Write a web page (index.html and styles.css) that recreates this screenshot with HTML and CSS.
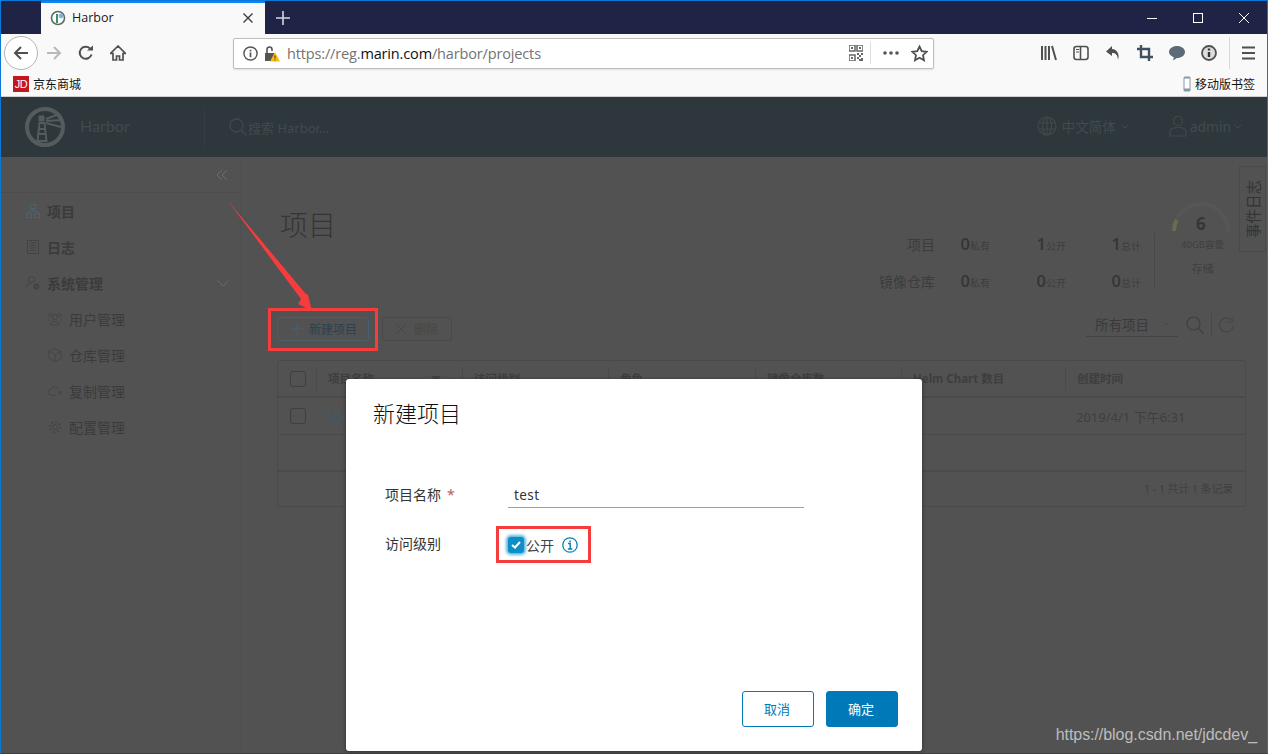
FILE: index.html
```html
<!DOCTYPE html>
<html lang="zh">
<head>
  <meta charset="UTF-8">
  <title>Harbor</title>
  <link rel="stylesheet" href="styles.css">
</head>
<body>
<div class="window">

  <!-- browser chrome -->
  <div class="titlebar">
    <div class="tab">
      <svg class="favicon" width="16" height="16" viewBox="0 0 16 16"><circle cx="8" cy="8" r="6.500" fill="#fff" stroke="#5b6b66" stroke-width="1.600"/><path d="M6 4h2v9H6z" fill="#3f8f5f"/><circle cx="11" cy="6" r="2.400" fill="#7fb6d8"/></svg>
      <span class="tab-title">Harbor</span>
      <svg class="tab-close" width="12" height="12" viewBox="0 0 12 12"><path d="M1.500 1.500l9 9M10.500 1.500l-9 9" stroke="#3c3c3c" stroke-width="1.400"/></svg>
    </div>
    <svg class="newtab" width="14" height="14" viewBox="0 0 14 14"><path d="M7 0v14M0 7h14" stroke="#d4d6e2" stroke-width="1.600"/></svg>
    <div class="win-controls">
      <svg width="46" height="12" viewBox="0 0 46 12"><path d="M18 6.500h10" stroke="#fff"/></svg>
      <svg width="46" height="12" viewBox="0 0 46 12"><rect x="18.500" y="1.500" width="9" height="9" fill="none" stroke="#fff"/></svg>
      <svg width="46" height="12" viewBox="0 0 46 12"><path d="M18 1l10 10M28 1L18 11" stroke="#fff"/></svg>
    </div>
  </div>

  <div class="toolbar">
    <div class="nav-btn back">
      <svg width="16" height="16" viewBox="0 0 16 16"><path d="M15 8H2M8 2L2 8l6 6" fill="none" stroke="#505050" stroke-width="2"/></svg>
    </div>
    <div class="nav-btn">
      <svg width="16" height="16" viewBox="0 0 16 16"><path d="M1 8h13M8 2l6 6-6 6" fill="none" stroke="#b9b9b9" stroke-width="2"/></svg>
    </div>
    <div class="nav-btn">
      <svg width="16" height="16" viewBox="0 0 16 16"><path d="M13.500 9.500A6 6 0 1 1 12 3.500" fill="none" stroke="#505050" stroke-width="2"/><path d="M9 5.500h6v-5z" fill="#505050"/></svg>
    </div>
    <div class="nav-btn">
      <svg width="16" height="16" viewBox="0 0 16 16"><path d="M8 1L.5 8.500H3V15h3.500v-4h3v4H13V8.500h2.500z" fill="none" stroke="#505050" stroke-width="1.700"/></svg>
    </div>

    <div class="urlbar">
      <svg class="url-info" width="15" height="15" viewBox="0 0 16 16"><circle cx="8" cy="8" r="7" fill="none" stroke="#555" stroke-width="1.500"/><path d="M8 7v5M8 4v1.800" stroke="#555" stroke-width="1.800"/></svg>
      <svg class="url-lock" width="16" height="17" viewBox="0 0 16 17"><path d="M1 8h9v8H1z" fill="#555"/><path d="M3 8V4.500a2.500 2.500 0 0 1 5 0V6" fill="none" stroke="#555" stroke-width="1.600"/><path d="M11 7l5 9.500H6z" fill="#fdb913"/><path d="M11 10.500v3M11 14.500v1" stroke="#333"/></svg>
      <span class="url-text">https://reg.<b>marin.com</b>/harbor/projects</span>
      <svg class="url-qr" width="14" height="16" viewBox="0 0 14 16"><path d="M0 0h6v6H0zM8 0h6v6H8zM0 10h6v6H0z" fill="none" stroke="#666" stroke-width="1.500"/><path d="M8 8h2v2H8zM12 8h2v2h-2zM10 10h2v2h-2zM8 12h2v2H8zM12 13h2v3h-2zM10 14h2v2h-2zM2 2h2v2H2zM10 2h2v2h-2zM2 12h2v2H2z" fill="#666"/></svg>
      <span class="url-sep"></span>
      <svg class="url-dots" width="16" height="4" viewBox="0 0 16 4"><circle cx="2" cy="2" r="1.800" fill="#555"/><circle cx="8" cy="2" r="1.800" fill="#555"/><circle cx="14" cy="2" r="1.800" fill="#555"/></svg>
      <svg class="url-star" width="17" height="17" viewBox="0 0 17 17"><path d="M8.500 1.500l2.200 4.700 5 .6-3.700 3.400 1 5-4.500-2.500L4 15.200l1-5-3.700-3.400 5-.6z" fill="none" stroke="#505050" stroke-width="1.800"/></svg>
    </div>

    <div class="tools">
      <svg width="16" height="16" viewBox="0 0 16 16"><path d="M1 1v14M4.500 1v14M8 1v14M11 1l4 14" fill="none" stroke="#505050" stroke-width="2"/></svg>
      <svg width="16" height="16" viewBox="0 0 16 16"><rect x="1" y="1.500" width="14" height="13" rx="2.500" fill="none" stroke="#505050" stroke-width="1.600"/><path d="M7.500 2v12" stroke="#505050" stroke-width="1.600"/><path d="M3 4.500h3M3 7h3" stroke="#505050"/></svg>
      <svg width="16" height="16" viewBox="0 0 16 16"><path d="M7 1L1 6.500 7 11V8c3.500 0 5.500 1.500 6 7 2-6-1-10.500-6-11z" fill="#505050"/></svg>
      <svg width="16" height="16" viewBox="0 0 16 16"><path d="M4 0v12h12M0 4h12v12" fill="none" stroke="#3f5160" stroke-width="2.400"/></svg>
      <svg width="16" height="16" viewBox="0 0 16 16"><path d="M8 1c4.400 0 8 2.600 8 6s-3.600 6-8 6l-4 2.500.8-3.300C2 11.200 0 9.300 0 7c0-3.400 3.600-6 8-6z" fill="#5d6b78"/></svg>
      <svg width="16" height="16" viewBox="0 0 16 16"><circle cx="8" cy="8" r="7" fill="#ddd" stroke="#505050" stroke-width="1.800"/><path d="M8 7v5M8 3.500v2" stroke="#333" stroke-width="2.400"/></svg>
      <span class="tool-sep"></span>
      <svg class="tool-menu" width="13" height="14" viewBox="0 0 13 14"><path d="M0 1.500h13M0 7h13M0 12.500h13" stroke="#505050" stroke-width="2"/></svg>
    </div>
  </div>

  <div class="bookmarks">
    <div class="bookmark"><span class="jd">JD</span>京东商城</div>
    <div class="bookmark">
      <svg width="8" height="16" viewBox="0 0 8 16"><rect x=".5" y=".5" width="7" height="15" rx="1.500" fill="#8a97a6"/><rect x="1.500" y="2.500" width="5" height="10" fill="#fff"/></svg>
      移动版书签
    </div>
  </div>

  <!-- harbor page, dimmed by the open modal -->
  <div class="page">
    <header class="app-header">
      <div class="brand">
        <svg width="40" height="40" viewBox="0 0 40 40" fill="none" stroke="#565c5e"><circle cx="20" cy="20" r="18" stroke-width="4"/><path d="M14.500 16l-2 18h9l-2-18zM13 22h8M13 27h8" stroke-width="2"/><path d="M14 14h5V9h-5z" fill="#565c5e" stroke-width="1"/><path d="M21 12l13-5M21 14l16-1M21 16l15 4" stroke-width="2"/></svg>
        <span>Harbor</span>
      </div>
      <div class="global-search">
        <svg width="18" height="18" viewBox="0 0 18 18" fill="none" stroke="#42494d" stroke-width="1.300"><circle cx="7.500" cy="7.500" r="6.500"/><path d="M12 12l5.500 5.500"/></svg>
        <span>搜索 Harbor...</span>
      </div>
      <div class="header-right">
        <div class="header-menu lang">
          <svg width="20" height="20" viewBox="0 0 20 20" fill="none" stroke="#42494d" stroke-width="1.200"><circle cx="10" cy="10" r="9"/><ellipse cx="10" cy="10" rx="4.500" ry="9"/><path d="M10 1v18M1.500 7h17M1.500 13h17"/></svg>
          <span>中文简体</span>
          <svg width="8" height="5" viewBox="0 0 8 5" fill="none" stroke="#42494d"><path d="M.5.500L4 4 7.500.500"/></svg>
        </div>
        <div class="header-menu user">
          <svg width="18" height="22" viewBox="0 0 18 22" fill="none" stroke="#42494d" stroke-width="1.200"><circle cx="9" cy="6" r="4.500"/><path d="M1 21v-4c0-3 3-4.500 8-4.500s8 1.500 8 4.500v4z"/></svg>
          <span>admin</span>
          <svg width="8" height="5" viewBox="0 0 8 5" fill="none" stroke="#42494d"><path d="M.5.500L4 4 7.500.500"/></svg>
        </div>
      </div>
    </header>

    <div class="app-body">
      <nav class="sidenav">
        <div class="nav-collapse">
          <svg width="12" height="12" viewBox="0 0 12 12" fill="none" stroke="#6e6e6e"><path d="M6 1L1 6l5 5M11 1L6 6l5 5"/></svg>
        </div>
        <a class="nav-item">
          <svg width="14" height="14" viewBox="0 0 14 14" fill="none" stroke="#4a6372"><rect x="4.500" y=".5" width="5" height="4"/><rect x=".5" y="9.500" width="5" height="4"/><rect x="8.500" y="9.500" width="5" height="4"/><path d="M7 4.500V7M3 9.500V7h8v2.500"/></svg>
          项目
        </a>
        <a class="nav-item">
          <svg width="14" height="14" viewBox="0 0 12 14" fill="none" stroke="#434343"><rect x=".5" y=".5" width="11" height="13"/><path d="M3 3h6M3 5.500h6M3 8h6M3 10.500h6"/></svg>
          日志
        </a>
        <a class="nav-item">
          <svg width="14" height="14" viewBox="0 0 14 14" fill="none" stroke="#434343"><circle cx="5.500" cy="3.500" r="3"/><path d="M.5 13v-2.500c0-2 2-3 5-3"/><circle cx="10.500" cy="10.500" r="2" stroke-width="2"/></svg>
          系统管理
          <svg class="nav-chevron" width="12" height="7" viewBox="0 0 12 7" fill="none" stroke="#6a6a6a"><path d="M.5.500L6 6 11.500.500"/></svg>
        </a>
        <a class="nav-item sub">
          <svg width="14" height="14" viewBox="0 0 14 14" fill="none" stroke="#454545"><circle cx="7" cy="5" r="2.500"/><circle cx="2.500" cy="3" r="1.800"/><circle cx="11.500" cy="3" r="1.800"/><path d="M3 13v-2c0-2 8-2 8 0v2zM.5 9V7M13.500 9V7"/></svg>
          用户管理
        </a>
        <a class="nav-item sub">
          <svg width="14" height="14" viewBox="0 0 14 14" fill="none" stroke="#454545"><path d="M7 .5l6 3v7l-6 3-6-3v-7zM1 3.500L7 6.500l6-3M7 6.500v7"/></svg>
          仓库管理
        </a>
        <a class="nav-item sub">
          <svg width="16" height="12" viewBox="0 0 16 12" fill="none" stroke="#454545"><path d="M9 11H4a3.500 3.500 0 0 1-.5-7A4.500 4.500 0 0 1 12 4M15 6v3h-3M15 9a3 3 0 0 0-3-2"/></svg>
          复制管理
        </a>
        <a class="nav-item sub">
          <svg width="14" height="14" viewBox="0 0 14 14" fill="none" stroke="#454545"><circle cx="7" cy="7" r="2.500"/><circle cx="7" cy="7" r="5.200" stroke-width="2" stroke-dasharray="2 2"/></svg>
          配置管理
        </a>
      </nav>

      <main class="content">
        <div class="summary-row">
          <h1 class="page-title">项目</h1>
          <div class="stats">
            <span class="stat-label">项目</span>
            <span class="stat"><b>0</b>私有</span>
            <span class="stat"><b>1</b>公开</span>
            <span class="stat"><b>1</b>总计</span>
            <span class="stat-label">镜像仓库</span>
            <span class="stat"><b>0</b>私有</span>
            <span class="stat"><b>0</b>公开</span>
            <span class="stat"><b>0</b>总计</span>
          </div>
          <div class="storage">
            <svg class="gauge" width="60" height="30" viewBox="0 0 60 30" fill="none" stroke-width="4"><path d="M3 29a27 27 0 0 1 54 0" stroke="#565656"/><path d="M3 29a27 27 0 0 1 2.500-11" stroke="#63704f"/></svg>
            <b class="gauge-num">6</b>
            <span class="gauge-cap">40GB容量</span>
            <span class="gauge-label">存储</span>
          </div>
        </div>

        <div class="action-bar">
          <button class="btn btn-new">
            <svg width="12" height="12" viewBox="0 0 12 12"><path d="M6 0v12M0 6h12" stroke="#46606e" stroke-width="1.200"/></svg>
            新建项目
          </button>
          <button class="btn btn-del">
            <svg width="10" height="10" viewBox="0 0 10 10"><path d="M0 0l10 10M10 0L0 10" stroke="#474747"/></svg>
            删除
          </button>
          <div class="filter">
            <div class="filter-select">
              所有项目
              <svg width="8" height="5" viewBox="0 0 8 5" fill="none" stroke="#474747"><path d="M.5.500L4 4 7.500.500"/></svg>
            </div>
            <svg width="18" height="18" viewBox="0 0 18 18" fill="none" stroke="#3f3f3f" stroke-width="1.200"><circle cx="7.500" cy="7.500" r="6.500"/><path d="M12 12l5.500 5.500"/></svg>
            <span class="filter-sep"></span>
            <svg width="16" height="16" viewBox="0 0 16 16" fill="none" stroke="#454545" stroke-width="1.200"><path d="M14.500 9A7 7 0 1 1 12 2.500M13 .5v4.500H8.500"/></svg>
          </div>
        </div>

        <div class="datagrid">
          <div class="dg-row dg-head">
            <div class="dg-cell"><span class="check"></span></div>
            <div class="dg-cell dg-sorted">项目名称<svg width="10" height="6" viewBox="0 0 10 6"><path d="M0 0h10L5 6z" fill="#424242"/></svg></div>
            <div class="dg-cell">访问级别</div>
            <div class="dg-cell">角色</div>
            <div class="dg-cell">镜像仓库数</div>
            <div class="dg-cell">Helm Chart 数目</div>
            <div class="dg-cell">创建时间</div>
          </div>
          <div class="dg-row dg-body">
            <div class="dg-cell"><span class="check"></span></div>
            <div class="dg-cell dg-link">library</div>
            <div class="dg-cell"></div>
            <div class="dg-cell"></div>
            <div class="dg-cell"></div>
            <div class="dg-cell"></div>
            <div class="dg-cell">2019/4/1 下午6:31</div>
          </div>
          <div class="dg-empty"></div>
          <div class="dg-foot">1 - 1 共计 1 条记录</div>
        </div>
      </main>

      <div class="event-tab"><span>事件日志</span></div>
    </div>
  </div>

  <!-- modal -->
  <div class="modal-layer">
    <div class="modal">
      <h3 class="modal-title">新建项目</h3>
      <div class="form-row form-name">
        <label class="form-label">项目名称<i>*</i></label>
        <div class="form-input">test</div>
      </div>
      <div class="form-row form-level">
        <label class="form-label">访问级别</label>
        <span class="checked">
          <svg width="10" height="8" viewBox="0 0 10 8" fill="none" stroke="#fff" stroke-width="2"><path d="M1 4l3 2.500L9 1"/></svg>
        </span>
        <span class="check-text">公开</span>
        <svg class="form-info" width="16" height="16" viewBox="0 0 16 16" fill="none" stroke="#0f7fb8" stroke-width="1.300"><circle cx="8" cy="8" r="7.200"/><path d="M6 6.500h2.200V12M5.800 12h4.600M8 3.500v1.800" stroke-width="1.500"/></svg>
      </div>
      <div class="modal-foot">
        <button class="modal-btn cancel">取消</button>
        <button class="modal-btn ok">确定</button>
      </div>
    </div>
  </div>

  <!-- annotations on top of the screenshot -->
  <div class="mark mark-new"></div>
  <div class="mark mark-public"></div>
  <svg class="arrow" width="100" height="120" viewBox="0 0 100 120"><path d="M0 0L77 92l3 2 4 16-14-7 3-5z" fill="#f63c3c"/></svg>
  <div class="watermark">https://blog.csdn.net/jdcdev_</div>
</div>
</body>
</html>
```

FILE: styles.css
```css
* {
  box-sizing: border-box;
}

html, body {
  margin: 0;
  height: 100%;
  overflow: hidden;
}

body {
  font-family: "Noto Sans", "Noto Sans CJK SC", sans-serif;
  color: #3a3a3a;
}

svg {
  flex: none;
  display: block;
}

.window {
  position: relative;
  width: 1268px;
  height: 754px;
  display: flex;
  flex-direction: column;
  border: 1px solid #0a78d8;
  border-bottom-color: #3f3f3f;
  background: #525252;
  overflow: hidden;
}

/* browser chrome */
.titlebar {
  height: 33px;
  display: flex;
  align-items: center;
  background: #1f2345;
  flex: none;
}

.tab {
  margin-left: 40px;
  width: 224px;
  height: 33px;
  display: flex;
  align-items: center;
  background: #f9f9fa;
  border-top: 2px solid #0a84ff;
  color: #1a1a1a;
  font-size: 12.500px;
  padding: 0 0 2px 9px;
}

.tab-title {
  margin-left: 6px;
  font-family: "Open Sans", "Noto Sans", sans-serif;
}

.tab-close {
  margin-left: auto;
  margin-right: 11px;
}

.newtab {
  margin-left: 11px;
}

.win-controls {
  margin-left: auto;
  display: flex;
}

.toolbar {
  height: 38px;
  display: flex;
  align-items: center;
  background: #f9f9fa;
  flex: none;
  padding-left: 3px;
}

.nav-btn {
  width: 32px;
  height: 34px;
  display: flex;
  align-items: center;
  justify-content: center;
}

.nav-btn.back {
  width: 34px;
  border: 1px solid #b4b4b4;
  border-radius: 50%;
  background: #fff;
}

.urlbar {
  margin-left: 99px;
  width: 701px;
  height: 31px;
  display: flex;
  align-items: center;
  background: #fff;
  border: 1px solid #bdbdbd;
  border-radius: 2px;
  box-shadow: 0 1px 2px rgba(0, 0, 0, 0.1);
  padding-left: 9px;
}

.url-lock {
  margin-left: 6px;
}

.url-text {
  margin-left: 7px;
  font-family: "Open Sans", "Noto Sans", sans-serif;
  font-size: 14.500px;
  color: #737373;
  white-space: nowrap;
  letter-spacing: -0.15px;
}

.url-text b {
  font-weight: 400;
  color: #111;
}

.url-qr {
  margin-left: auto;
}

.url-sep {
  width: 1px;
  height: 22px;
  margin: 0 12px 0 7px;
  background: #e0e0e0;
}

.url-star {
  margin: 0 5px 0 12px;
}

.tools {
  margin-left: 107px;
  display: flex;
  align-items: center;
  gap: 16px;
}

.tool-sep {
  width: 1px;
  height: 32px;
  margin-left: -4px;
  background: #d9d9d9;
}

.tool-menu {
  margin-left: -4px;
}

.bookmarks {
  height: 25px;
  display: flex;
  align-items: center;
  justify-content: space-between;
  background: #f9f9fa;
  border-bottom: 1px solid #d0d0d0;
  font-size: 12px;
  color: #111;
  padding: 0 12px 0 12px;
  flex: none;
}

.bookmark {
  display: flex;
  align-items: center;
  gap: 4px;
}

.jd {
  width: 16px;
  height: 16px;
  background: #c5161d;
  color: #fff;
  font-family: "Liberation Sans", sans-serif;
  font-size: 11px;
  line-height: 16px;
  text-align: center;
  letter-spacing: -0.5px;
}

/* harbor page, already dimmed */
.page {
  flex: 1;
  display: flex;
  flex-direction: column;
  min-height: 0;
}

.app-header {
  height: 60px;
  display: flex;
  align-items: center;
  background: #2d373c;
  color: #434a4e;
  flex: none;
}

.brand {
  width: 204px;
  height: 40px;
  display: flex;
  align-items: center;
  gap: 15px;
  padding-left: 24px;
  border-right: 1px solid #333d42;
  font-size: 16px;
  font-family: "Lato", "Noto Sans", sans-serif;
}

.brand span {
  margin-bottom: 3px;
}

.global-search {
  margin-left: 24px;
  display: flex;
  align-items: center;
  gap: 1px;
  font-size: 13px;
}

.header-right {
  margin-left: auto;
  display: flex;
  align-items: center;
  padding-right: 25px;
}

.header-menu {
  display: flex;
  align-items: center;
  gap: 5px;
  font-size: 13.500px;
  margin-bottom: 2px;
}

.header-menu.user {
  margin-left: 40px;
  gap: 3px;
  font-size: 13.800px;
}

.app-body {
  position: relative;
  flex: 1;
  display: flex;
  min-height: 0;
}

.sidenav {
  width: 240px;
  flex: none;
  border-right: 1px solid #4f4f4f;
  font-size: 14px;
  color: #3b3b3b;
}

.nav-collapse {
  height: 36px;
  display: flex;
  align-items: center;
  justify-content: flex-end;
  padding-right: 12px;
  border-bottom: 1px solid #4c4c4c;
}

.nav-item {
  height: 36px;
  display: flex;
  align-items: center;
  gap: 7px;
  padding-left: 25px;
  font-weight: 700;
}

.nav-item.sub {
  padding-left: 47px;
  font-weight: 400;
}

.nav-item.sub svg {
  width: 14px;
}

.nav-chevron {
  margin-left: auto;
  margin-right: 11px;
}

.content {
  flex: 1;
  min-width: 0;
  padding: 0 21px 0 36px;
  display: flex;
  flex-direction: column;
}

.summary-row {
  height: 160px;
  display: flex;
  align-items: flex-start;
  flex: none;
}

.page-title {
  margin: 49px 0 0 3px;
  font-size: 28px;
  font-weight: 300;
  line-height: 38px;
  color: #353535;
}

.stats {
  margin: 68px 0 0 auto;
  display: grid;
  grid-template-columns: 56px 55px 76px 75px;
  grid-auto-rows: 37px;
  align-items: center;
  justify-items: end;
}

.stat-label {
  font-size: 14px;
  color: #3c3c3c;
}

.stat {
  font-size: 10px;
  color: #3e3e3e;
  display: flex;
  align-items: baseline;
}

.stat b {
  font-family: "Open Sans", sans-serif;
  font-size: 16.500px;
  font-weight: 600;
  color: #353535;
}

.storage {
  position: relative;
  width: 92px;
  height: 56px;
  margin: 76px 0 0 13px;
  border-left: 1px solid #484848;
  display: flex;
  flex-direction: column;
  align-items: center;
  padding-left: 4px;
}

.gauge {
  position: absolute;
  left: 16px;
  top: -31px;
}

.gauge-num {
  position: absolute;
  left: 41px;
  top: -21px;
  font-family: "Open Sans", sans-serif;
  font-size: 17px;
  line-height: 24px;
  color: #363636;
}

.gauge-cap {
  font-size: 9.500px;
  line-height: 14px;
  margin-top: 5px;
  color: #3f3f3f;
}

.gauge-label {
  font-size: 11px;
  line-height: 16px;
  margin-top: 9px;
  color: #404040;
}

.action-bar {
  height: 24px;
  display: flex;
  align-items: center;
  gap: 13px;
  flex: none;
}

.btn {
  height: 24px;
  display: flex;
  align-items: center;
  justify-content: center;
  gap: 6px;
  padding: 0;
  font: 12px "Noto Sans", "Noto Sans CJK SC", sans-serif;
  background: none;
  border-radius: 3px;
}

.btn-new {
  width: 92px;
  padding-left: 2px;
  border: 1px solid #46606e;
  color: #2c4250;
}

.btn-del {
  width: 70px;
  border: 1px solid #494949;
  color: #474747;
  gap: 8px;
}

.filter {
  margin-left: auto;
  display: flex;
  align-items: center;
  margin: 0 11px 8px auto;
}

.filter-select {
  width: 92px;
  height: 22px;
  display: flex;
  align-items: center;
  justify-content: space-between;
  padding: 0 8px 4px 9px;
  border-bottom: 1px solid #444;
  font-size: 13.500px;
  color: #3a3a3a;
  margin: 2px 8px 0 0;
}

.filter-sep {
  width: 1px;
  height: 24px;
  margin: 0 7px;
  background: #484848;
}

.datagrid {
  margin-top: 19px;
  width: 969px;
  height: 147px;
  border: 1px solid #4a4a4a;
  border-radius: 3px;
  font-size: 11.500px;
  flex: none;
}

.dg-row {
  display: grid;
  grid-template-columns: 38px 146px 146px 147px 146px 164px 1fr;
  height: 37px;
  align-items: center;
}

.dg-head {
  border-bottom: 2px solid #4a4a4a;
  font-weight: 700;
  color: #3e3e3e;
}

.dg-head .dg-cell {
  height: 24px;
  line-height: 24px;
  border-left: 1px solid #4a4a4a;
}

.dg-head .dg-cell:first-child {
  border-left: 0;
}

.dg-cell {
  padding-left: 11px;
  display: flex;
  align-items: center;
}

.dg-cell:first-child {
  padding-left: 12px;
}

.dg-sorted {
  justify-content: space-between;
  padding-right: 21px;
}

.dg-body {
  border-bottom: 1px solid #4a4a4a;
  font-size: 13px;
  color: #3f3f3f;
}

.dg-link {
  color: #415a68;
}

.check {
  width: 16px;
  height: 16px;
  border: 1px solid #3f3f3f;
  border-radius: 3px;
}

.dg-empty {
  height: 37px;
  border-bottom: 2px solid #4a4a4a;
}

.dg-foot {
  height: 34px;
  line-height: 34px;
  text-align: right;
  padding-right: 12px;
  font-size: 11px;
  letter-spacing: -0.2px;
  color: #404040;
}

.event-tab {
  position: absolute;
  right: 1px;
  top: 9px;
  width: 27px;
  height: 86px;
  border: 1px solid #4a4a4a;
  display: flex;
  align-items: center;
  justify-content: center;
  font-size: 14.500px;
  color: #333;
}

.event-tab span {
  writing-mode: vertical-rl;
  text-orientation: sideways;
  transform: rotate(180deg);
}

/* modal */
.modal-layer {
  position: absolute;
  left: 0;
  right: 0;
  top: 378px;
  display: flex;
  justify-content: center;
}

.modal {
  width: 576px;
  height: 372px;
  display: flex;
  flex-direction: column;
  padding: 22px 24px 24px 27px;
  background: #fff;
  border-radius: 3px;
  box-shadow: 0 1px 4px rgba(0, 0, 0, 0.4);
  color: #333;
}

.modal-title {
  margin: 0;
  font-size: 22px;
  font-weight: 300;
  line-height: 24px;
  color: #111;
}

.form-row {
  display: flex;
  font-size: 14px;
  padding-left: 12px;
}

.form-name {
  margin-top: 58px;
  line-height: 23px;
}

.form-level {
  margin-top: 25px;
  align-items: center;
}

.form-label {
  width: 123px;
  flex: none;
}

.form-level .form-label {
  margin-bottom: 4px;
}

.form-label i {
  margin-left: 6px;
  color: #c25a5a;
  font-style: normal;
}

.form-input {
  width: 296px;
  height: 25px;
  padding-left: 6px;
  border-bottom: 1px solid #a0a0a0;
  font-size: 13.500px;
  line-height: 25px;
  letter-spacing: 0.4px;
}

.checked {
  width: 16px;
  height: 16px;
  display: flex;
  align-items: center;
  justify-content: center;
  background: #0a8fc9;
  border-radius: 3px;
  box-shadow: 0 0 3px 2px #60b6dc;
}

.check-text {
  margin-left: 2px;
  color: #444;
}

.form-info {
  margin-left: 8px;
}

.modal-foot {
  margin-top: auto;
  display: flex;
  justify-content: flex-end;
  gap: 12px;
}

.modal-btn {
  width: 72px;
  height: 36px;
  border: 1px solid #0079b8;
  border-radius: 3px;
  font: 13px "Noto Sans", "Noto Sans CJK SC", sans-serif;
  padding: 0 2px 2px 0;
}

.cancel {
  background: #fff;
  color: #0079b8;
}

.ok {
  background: #0079b8;
  color: #fff;
}

/* annotations */
.mark {
  position: absolute;
  border: 3px solid #f63c3c;
}

.mark-new {
  left: 267px;
  top: 307px;
  width: 110px;
  height: 43px;
}

.mark-public {
  left: 495px;
  top: 525px;
  width: 95px;
  height: 37px;
}

.arrow {
  position: absolute;
  left: 227px;
  top: 200px;
}

.watermark {
  position: absolute;
  right: 10px;
  bottom: 9px;
  font: 16px "Liberation Sans", sans-serif;
  letter-spacing: -0.05px;
  color: #bdbdbd;
}
```
